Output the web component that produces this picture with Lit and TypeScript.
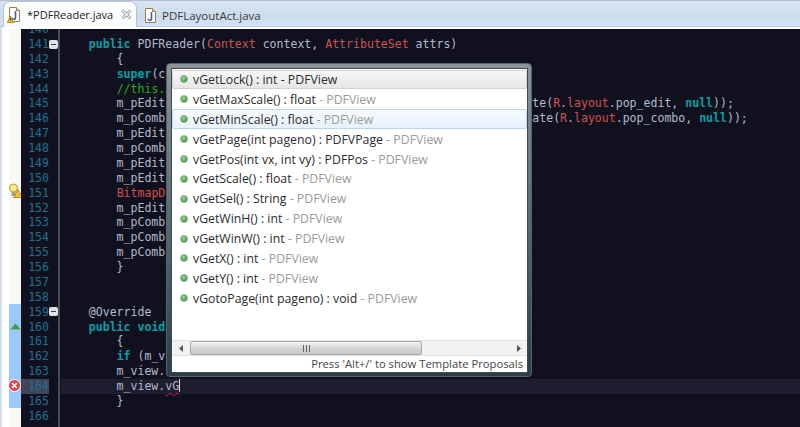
import { LitElement, html, css, svg } from "lit";
import { customElement } from "lit/decorators.js";

const k = (s: string) => html`<span class="kw">${s}</span>`;
const r = (s: string) => html`<span class="red">${s}</span>`;

const codeLines: unknown[] = [
  "",
  html`    ${k("public")} PDFReader(${r("Context")} context, ${r("AttributeSet")} attrs)`,
  "        {",
  html`        ${k("super")}(c`,
  html`        <span class="cm">//this.</span>`,
  html`        m_pEdit<span class="tail">te(${r("R")}.${r("layout")}.pop_edit, ${k("null")}));</span>`,
  html`        m_pComb<span class="tail">ate(${r("R")}.${r("layout")}.pop_combo, ${k("null")}));</span>`,
  "        m_pEdit",
  "        m_pComb",
  "        m_pEdit",
  "        m_pEdit",
  html`        ${r("BitmapD")}`,
  "        m_pEdit",
  "        m_pComb",
  "        m_pComb",
  "        m_pComb",
  "        }",
  "",
  "",
  "    @Override",
  html`    ${k("public")} ${k("void")}`,
  "        {",
  html`        ${k("if")} (m_v`,
  "        m_view.",
  html`        m_view.<span class="err">vG</span><span class="caret"></span>`,
  "        }",
  "",
];

const proposals: [string, string][] = [
  ["vGetLock() : int", "PDFView"],
  ["vGetMaxScale() : float", "PDFView"],
  ["vGetMinScale() : float", "PDFView"],
  ["vGetPage(int pageno) : PDFVPage", "PDFView"],
  ["vGetPos(int vx, int vy) : PDFPos", "PDFView"],
  ["vGetScale() : float", "PDFView"],
  ["vGetSel() : String", "PDFView"],
  ["vGetWinH() : int", "PDFView"],
  ["vGetWinW() : int", "PDFView"],
  ["vGetX() : int", "PDFView"],
  ["vGetY() : int", "PDFView"],
  ["vGotoPage(int pageno) : void", "PDFView"],
];

const javaIcon = (warn: boolean) => html`<svg class="ticon" width="15" height="17" viewBox="0 0 15 17">
  <path d="M2.500 1.500h7l3 3v11h-10z" fill="#fdfdfb" stroke="#94814f"/>
  <path d="M9.500 1.500v3h3" fill="#e8dfc0" stroke="#94814f"/>
  <path d="M8.500 5v6.500q0 1.800-1.700 1.800t-1.800-1.600" fill="none" stroke="#3d5fa8" stroke-width="1.500"/>
  ${warn ? svg`<path d="M3.500 10l3.200 6.500h-6.400z" fill="#f2c230" stroke="#a67a14" stroke-width=".8"/>
  <path d="M3.500 12.300v2.200" stroke="#40300a" stroke-width="1"/>` : ""}
</svg>`;

@customElement("app-root")
export class AppRoot extends LitElement {
  static styles = css`
    :host { display: block; width: 800px; height: 427px; overflow: hidden; background: #f0f5fa; position: relative; font-family: "Open Sans", "Liberation Sans", sans-serif; }
    .tabs { display: flex; height: 27px; padding: 2px 0 0 3px; box-sizing: border-box; background: linear-gradient(#d8e5f2, #cbdcec 60%, #d3e3f2); border-top: 1px solid #b8bcd4; border-bottom: 1px solid #c0c4dc; }
    .tab { display: flex; align-items: center; height: 24px; font-size: 11.500px; color: #333; }
    .ticon { flex: none; }
    .tab.active { width: 134px; box-sizing: border-box; height: 26px; margin-top: -2px; padding-left: 3px; gap: 5px; font-size: 11px; background: linear-gradient(#ffffff, #f8fafc); border: 1px solid #b6c4d4; border-bottom: 0; border-radius: 7px 7px 0 0; color: #222; margin-right: 6px; }
    .tab.other { gap: 4px; color: #3a3a3a; }
    .close { margin-left: 3px; flex: none; }
    .body { display: flex; height: 400px; padding-top: 2px; box-sizing: border-box; background: #fff; }
    .edge { width: 2px; background: #d3dfec; flex: none; margin-top: -2px; }
    .ruler { width: 19px; flex: none; background: linear-gradient(90deg, #fff 7px, #f8f8f8 7px); position: relative; }
    .band { position: absolute; left: 7px; top: 275px; width: 12px; height: 104px; background-color: #a6d0fa;
      background-image: repeating-conic-gradient(#8fc2f7 0 25%, transparent 0 50%); background-size: 2px 2px; }
    .mk { position: absolute; }
    .nums { width: 37px; flex: none; background: #10101f; color: #1f7090; overflow: hidden; font: 11.550px/14.880px "DejaVu Sans Mono", monospace; padding-right: 9px; box-sizing: border-box; text-align: right; position: relative; }
    .nums .n { height: 14.880px; }
    .nums .n.cur { background: #43445a; }
    .lists { margin-top: -7px; }
    .sep { width: 2px; flex: none; background: #484c5a; position: relative; }
    .fold { position: absolute; left: -9px; width: 9px; height: 9px; background: #dfe3e8; border-radius: 2px; }
    .fold::after { content: ""; position: absolute; left: 2px; top: 4px; width: 5px; height: 1px; background: #444; }
    .gap { width: 1px; flex: none; background: #10101f; }
    .code { flex: 1; background: #10101f; color: #b0bccc; overflow: hidden; font: 11.550px/14.880px "DejaVu Sans Mono", monospace; }
    .line { height: 14.880px; white-space: pre; }
    .line.cur { background: #1e1e30; }
    .tail { display: inline-block; margin-left: 367px; }
    .kw { color: #05a0a5; font-weight: 700; }
    .red { color: #d0504f; }
    .cm { color: #1cb01c; }
    .err { text-decoration: underline wavy #d02060 1px; text-underline-offset: 2px; }
    .caret { display: inline-block; width: 1px; height: 13px; background: #d8d8d8; vertical-align: -2px; }

    .popup { position: absolute; left: 166px; top: 63px; width: 366px; height: 314px; box-sizing: border-box; padding: 4px 3px 3px 4px; border-radius: 4px;
      background: linear-gradient(#8a9498, #6e7f88 25%, #2b3e47); border: 1px solid #55646c; display: flex; }
    .inner { flex: 1; background: #fff; border: 1px solid #3e4a50; display: flex; flex-direction: column; min-width: 0; }
    .list { flex: 1; min-height: 0; overflow: hidden; padding-top: .5px; }
    .row { display: flex; align-items: center; height: 19.900px; padding-left: 8px; gap: 5px; font-size: 12.300px; color: #2b2b2b; white-space: nowrap; box-sizing: border-box; }
    .row.sel { background: linear-gradient(#f8f8f8, #e6e6e6); border: 1px solid #d2d2d2; border-radius: 2px; padding-left: 7px; }
    .row.hover { background: linear-gradient(#f6fafe, #e8f2fd); border: 1px solid #bcd6f2; border-radius: 2px; padding-left: 7px; }
    .dot { width: 8px; height: 8px; border-radius: 50%; flex: none; background: radial-gradient(circle at 40% 35%, #9fd39a, #4f9a56 70%); border: 1px solid #7caf80; box-sizing: border-box; }
    .src { color: #9a9a9a; }
    .sel .src { color: #2b2b2b; }
    .hscroll { height: 16px; box-sizing: border-box; display: flex; align-items: center; background: #f2f2f2; border-top: 1px solid #e4e4e4; border-bottom: 1px solid #e4e4e4; flex: none; }
    .arrow { width: 18px; flex: none; display: flex; justify-content: center; }
    .thumb { width: 232px; height: 14px; box-sizing: border-box; border: 1px solid #a8a8a8; border-radius: 2px; background: linear-gradient(#f4f4f4, #d6d6d6 50%, #c8c8c8); display: flex; align-items: center; justify-content: center; flex: none; }
    .spacer { flex: 1; }
    .status { height: 16px; flex: none; font-size: 11.250px; line-height: 16px; color: #444; text-align: right; padding-right: 4px; white-space: nowrap; }
  `;

  render() {
    const lineNos = Array.from({ length: 27 }, (_, i) => 140 + i);
    return html`
      <div class="tabs">
        <div class="tab active">
          ${javaIcon(true)}<span>*PDFReader.java</span>
          <svg class="close" width="11" height="11" viewBox="0 0 11 11">
            <path d="M1.500 1.500l8 8M9.500 1.500l-8 8" stroke="#8d9298" stroke-width="3" />
            <path d="M1.500 1.500l8 8M9.500 1.500l-8 8" stroke="#f6f6f6" stroke-width="1.200" />
          </svg>
        </div>
        <div class="tab other">${javaIcon(false)}<span>PDFLayoutAct.java</span></div>
      </div>
      <div class="body">
        <div class="edge"></div>
        <div class="ruler">
          <div class="band"></div>
          <svg class="mk" style="left:7px;top:154px" width="14" height="16" viewBox="0 0 14 16">
            <circle cx="4.500" cy="5" r="4" fill="#fbe98a" stroke="#b89a3a"/>
            <rect x="2.500" y="9" width="4" height="4" fill="#b0a070"/>
            <path d="M9 6.500l4.500 8h-9z" fill="#f2c230" stroke="#a67a14" stroke-width=".8"/>
          </svg>
          <svg class="mk" style="left:8px;top:294px" width="11" height="7" viewBox="0 0 11 7"><path d="M5.500 .5l5 6h-10z" fill="#3da03d"/></svg>
          <svg class="mk" style="left:6px;top:350px" width="13" height="13" viewBox="0 0 13 13">
            <circle cx="6.500" cy="6.500" r="6" fill="#d9484c" stroke="#fff"/>
            <path d="M4 4l5 5M9 4l-5 5" stroke="#fff" stroke-width="1.600"/>
          </svg>
        </div>
        <div class="nums"><div class="lists">
          ${lineNos.map((n) => html`<div class="n ${n === 164 ? "cur" : ""}">${n}</div>`)}
        </div></div>
        <div class="sep">
          <div class="fold" style="top:11px"></div>
          <div class="fold" style="top:278px"></div>
        </div>
        <div class="gap"></div>
        <div class="code"><div class="lists">
          ${codeLines.map((l, i) => html`<div class="line ${i === 24 ? "cur" : ""}">${l}</div>`)}
        </div></div>
      </div>
      <div class="popup">
        <div class="inner">
          <div class="list">
            ${proposals.map(
              ([a, b], i) => html`<div class="row ${i === 0 ? "sel" : i === 2 ? "hover" : ""}">
                <span class="dot"></span><span>${a} <span class="src">- ${b}</span></span>
              </div>`
            )}
          </div>
          <div class="hscroll">
            <div class="arrow"><svg width="5" height="7" viewBox="0 0 5 7"><path d="M4 0v7L0 3.500z" fill="#555"/></svg></div>
            <div class="thumb"><svg width="9" height="7" viewBox="0 0 9 7"><path d="M1.500 0v7M4.500 0v7M7.500 0v7" stroke="#666"/></svg></div>
            <div class="spacer"></div>
            <div class="arrow"><svg width="5" height="7" viewBox="0 0 5 7"><path d="M1 0v7l4-3.500z" fill="#555"/></svg></div>
          </div>
          <div class="status">Press 'Alt+/' to show Template Proposals</div>
        </div>
      </div>
    `;
  }
}
